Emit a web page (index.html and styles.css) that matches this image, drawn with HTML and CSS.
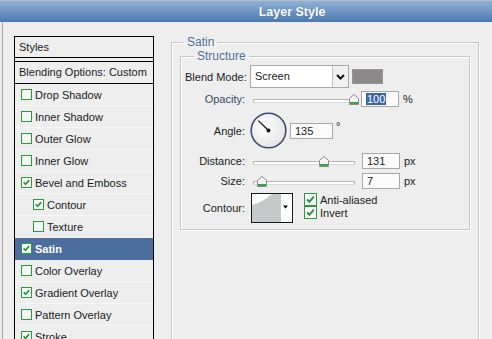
FILE: index.html
```html
<!DOCTYPE html>
<html lang="en">
<head>
  <meta charset="UTF-8">
  <title>Layer Style</title>
  <link rel="stylesheet" href="styles.css">
</head>
<body>
  <div class="window">
    <div class="titlebar">Layer Style</div>

    <div class="content">
      <!-- Styles list -->
      <div class="styles-list">
        <div class="list-head">Styles</div>
        <div class="list-gap"></div>
        <div class="list-blend">Blending Options: Custom</div>
        <ul class="effects">
          <li class="effect"><span class="check"></span>Drop Shadow</li>
          <li class="effect"><span class="check"></span>Inner Shadow</li>
          <li class="effect"><span class="check"></span>Outer Glow</li>
          <li class="effect"><span class="check"></span>Inner Glow</li>
          <li class="effect"><span class="check on"><svg viewBox="0 0 11 11"><path d="M2 5.2 L4.3 7.8 L8.8 2.6"/></svg></span>Bevel and Emboss</li>
          <li class="effect sub"><span class="check on"><svg viewBox="0 0 11 11"><path d="M2 5.2 L4.3 7.8 L8.8 2.6"/></svg></span>Contour</li>
          <li class="effect sub"><span class="check"></span>Texture</li>
          <li class="effect selected"><span class="check on"><svg viewBox="0 0 11 11"><path d="M2 5.2 L4.3 7.8 L8.8 2.6"/></svg></span>Satin</li>
          <li class="effect"><span class="check"></span>Color Overlay</li>
          <li class="effect"><span class="check on"><svg viewBox="0 0 11 11"><path d="M2 5.2 L4.3 7.8 L8.8 2.6"/></svg></span>Gradient Overlay</li>
          <li class="effect"><span class="check"></span>Pattern Overlay</li>
          <li class="effect"><span class="check on"><svg viewBox="0 0 11 11"><path d="M2 5.2 L4.3 7.8 L8.8 2.6"/></svg></span>Stroke</li>
        </ul>
      </div>

      <!-- Satin settings -->
      <fieldset class="group outer">
        <legend>Satin</legend>
        <fieldset class="group inner">
          <legend>Structure</legend>

          <div class="row blend-row">
            <label class="lbl">Blend Mode:</label>
            <div class="select">
              <span class="select-value">Screen</span>
              <span class="select-btn">
                <svg width="9" height="6" viewBox="0 0 9 6"><path d="M1 1 L4.5 4.5 L8 1"/></svg>
              </span>
            </div>
            <span class="swatch"></span>
          </div>

          <div class="row opacity-row">
            <label class="lbl lbl-blue">Opacity:</label>
            <div class="slider">
              <div class="track"></div>
              <svg class="thumb" style="left: 96px" width="10" height="11" viewBox="0 0 10 11"><path class="thumb-body" d="M0.5 4.5 L5 0.5 L9.5 4.5 L9.5 10.5 L0.5 10.5 Z"/><rect class="thumb-base" x="1" y="8" width="8" height="2"/></svg>
            </div>
            <div class="field field-op"><span class="sel">100</span></div>
            <span class="unit">%</span>
          </div>

          <div class="row angle-row">
            <label class="lbl">Angle:</label>
            <svg class="dial" width="37" height="37" viewBox="0 0 37 37">
              <defs>
                <radialGradient id="dialFill" cx="0.4" cy="0.4" r="0.7">
                  <stop offset="0" stop-color="#ffffff"/>
                  <stop offset="1" stop-color="#e2e2e2"/>
                </radialGradient>
              </defs>
              <circle cx="18.5" cy="18.5" r="17.3" fill="url(#dialFill)" stroke="#3e4c72" stroke-width="1.6"/>
              <line x1="8.3" y1="8.6" x2="18.5" y2="18.5" stroke="#000" stroke-width="1.1"/>
              <circle cx="18.5" cy="18.5" r="1.9" fill="#000"/>
            </svg>
            <div class="field field-angle">135</div>
            <span class="unit deg">°</span>
          </div>

          <div class="row distance-row">
            <label class="lbl">Distance:</label>
            <div class="slider">
              <div class="track"></div>
              <svg class="thumb" style="left: 66px" width="10" height="11" viewBox="0 0 10 11"><path class="thumb-body" d="M0.5 4.5 L5 0.5 L9.5 4.5 L9.5 10.5 L0.5 10.5 Z"/><rect class="thumb-base" x="1" y="8" width="8" height="2"/></svg>
            </div>
            <div class="field">131</div>
            <span class="unit">px</span>
          </div>

          <div class="row size-row">
            <label class="lbl">Size:</label>
            <div class="slider">
              <div class="track"></div>
              <svg class="thumb" style="left: 4px" width="10" height="11" viewBox="0 0 10 11"><path class="thumb-body" d="M0.5 4.5 L5 0.5 L9.5 4.5 L9.5 10.5 L0.5 10.5 Z"/><rect class="thumb-base" x="1" y="8" width="8" height="2"/></svg>
            </div>
            <div class="field">7</div>
            <span class="unit">px</span>
          </div>

          <div class="row contour-row">
            <label class="lbl">Contour:</label>
            <svg class="contour" width="42" height="30" viewBox="0 0 42 30">
              <rect x="0.5" y="0.5" width="41" height="29" fill="#fff" stroke="#1a1a1a"/>
              <path d="M1 12 Q12 9 21 1 L30 1 L30 29 L1 29 Z" fill="#c6c8ca"/>
              <path d="M32 12.5 L37 12.5 L34.5 15.5 Z" fill="#000"/>
            </svg>
            <div class="options">
              <div class="option"><span class="check big on"><svg viewBox="0 0 13 13"><path d="M2.5 6.5 L5.2 9.3 L10.5 3.2"/></svg></span>Anti-aliased</div>
              <div class="option"><span class="check big on"><svg viewBox="0 0 13 13"><path d="M2.5 6.5 L5.2 9.3 L10.5 3.2"/></svg></span>Invert</div>
            </div>
          </div>
        </fieldset>
      </fieldset>
    </div>
  </div>
</body>
</html>
```

FILE: styles.css
```css
* {
  box-sizing: border-box;
}

body {
  margin: 0;
  width: 492px;
  height: 339px;
  overflow: hidden;
  background: #eeeeee;
  font-family: 'Liberation Sans', Arial, sans-serif;
  font-size: 11px;
  color: #1b1b1b;
}

.window {
  width: 584px;
  height: 339px;
  overflow: hidden;
}

.titlebar {
  height: 22px;
  border-top: 1px solid #b9bcc2;
  background: linear-gradient(#8fb2d8, #6e95c4 50%, #4c79b0);
  color: #fff;
  font-weight: bold;
  font-size: 12.5px;
  line-height: 22px;
  text-align: center;
  text-shadow: 0 0 1px rgba(30, 50, 90, 0.5);
}

.content {
  display: flex;
  align-items: flex-start;
  margin-left: 2px;
  height: 317px;
  border-left: 1px solid #a9a9a9;
}

/* Styles list */
.styles-list {
  width: 140px;
  margin: 14px 0 0 11px;
  border: 1px solid #000;
}

.list-head {
  height: 21px;
  padding-left: 4px;
  line-height: 20px;
  border-bottom: 1px solid #000;
}

.list-gap {
  height: 4px;
  border-bottom: 1px solid #000;
}

.list-blend {
  height: 22px;
  padding-left: 4px;
  line-height: 21px;
  border-bottom: 1px solid #000;
}

.effects {
  list-style: none;
  margin: 0;
  padding: 0;
}

.effect {
  display: flex;
  align-items: center;
  gap: 3px;
  height: 22px;
  padding-left: 6px;
  border-bottom: 1px solid #f7f7f7;
}

.effect.sub {
  padding-left: 18px;
}

.effect.selected {
  background: #4b6e9e;
  color: #fff;
  font-weight: bold;
  border-bottom-color: #4b6e9e;
}

.check {
  display: inline-block;
  width: 11px;
  height: 11px;
  border: 1px solid #2a9b3a;
  background: #f6f6f6;
  flex-shrink: 0;
}

.check svg {
  display: block;
  width: 100%;
  height: 100%;
  fill: none;
  stroke: #1e9a2f;
  stroke-width: 2;
}

.check.on {
  background: #ffffff;
}

.check.big {
  width: 13px;
  height: 13px;
}

.check.big svg {
  stroke-width: 2.4;
}

/* Group boxes */
.group {
  margin: 0;
  min-width: 0;
  border: 1px solid #c6c6c6;
  box-shadow: 1px 1px 0 #fff, inset 1px 1px 0 #fff;
}

.group legend {
  padding: 0 3px;
  font-size: 12px;
  line-height: 14px;
  color: #4f6f9c;
}

.outer {
  width: 308px;
  height: 330px;
  margin: 13px 0 0 17px;
  padding: 0 8px;
}

.outer > legend {
  margin-left: 4px;
}

.inner {
  width: 290px;
  padding: 0 4px 6px;
}

.inner > legend {
  margin-left: 9px;
}

/* Form rows */
.row {
  display: flex;
  align-items: center;
}

.lbl {
  width: 60px;
  margin-right: 5px;
  text-align: right;
  white-space: nowrap;
}

.lbl-blue {
  color: #34496e;
}

.blend-row {
  margin-top: 2px;
}

.opacity-row {
  margin-top: 3px;
}

.angle-row {
  margin-top: 5px;
}

.distance-row,
.size-row,
.contour-row {
  margin-top: 4px;
}

.select {
  display: flex;
  width: 99px;
  height: 23px;
  border: 1px solid #a9a9a9;
  background: #fff;
}

.select-value {
  flex: 1;
  padding-left: 4px;
  line-height: 21px;
}

.select-btn {
  display: flex;
  align-items: center;
  justify-content: center;
  width: 16px;
  border-left: 1px solid #c2c2c2;
  background: #f1f1f1;
}

.select-btn svg {
  fill: none;
  stroke: #111;
  stroke-width: 2;
}

.swatch {
  width: 31px;
  height: 15px;
  margin-left: 3px;
  background: #8b8989;
  border: 1px solid #999696;
}

.slider {
  position: relative;
  width: 106px;
  height: 11px;
  margin-left: 3px;
}

.track {
  width: 102px;
  height: 4px;
  margin-top: 5px;
  border: 1px solid #b3b3b3;
  border-bottom-color: #dadada;
  background: #fff;
}

.thumb {
  position: absolute;
  top: 0;
}

.thumb-body {
  fill: #f5f5f5;
  stroke: #8a8a8a;
  stroke-width: 1;
}

.thumb-base {
  fill: #35a446;
}

.field {
  width: 38px;
  height: 16px;
  margin-left: 3px;
  padding-left: 4px;
  border: 1px solid #a8a8a8;
  background: #fbfbfb;
  line-height: 14px;
}

.field-op {
  margin-left: 2px;
}

.sel {
  background: #3a67a6;
  color: #fff;
  padding: 0 1px;
}

.field-angle {
  width: 43px;
  margin-left: 3px;
}

.unit {
  margin-left: 4px;
}

.deg {
  margin-left: 3px;
  align-self: flex-start;
  margin-top: 8px;
}

.dial {
  display: block;
}

.contour {
  display: block;
  margin-left: 1px;
}

.contour-row {
  align-items: flex-start;
}

.contour-row .lbl {
  margin-top: 9px;
}

.options {
  margin-left: 11px;
}

.option {
  display: flex;
  align-items: center;
  gap: 3px;
  height: 13px;
}
```
